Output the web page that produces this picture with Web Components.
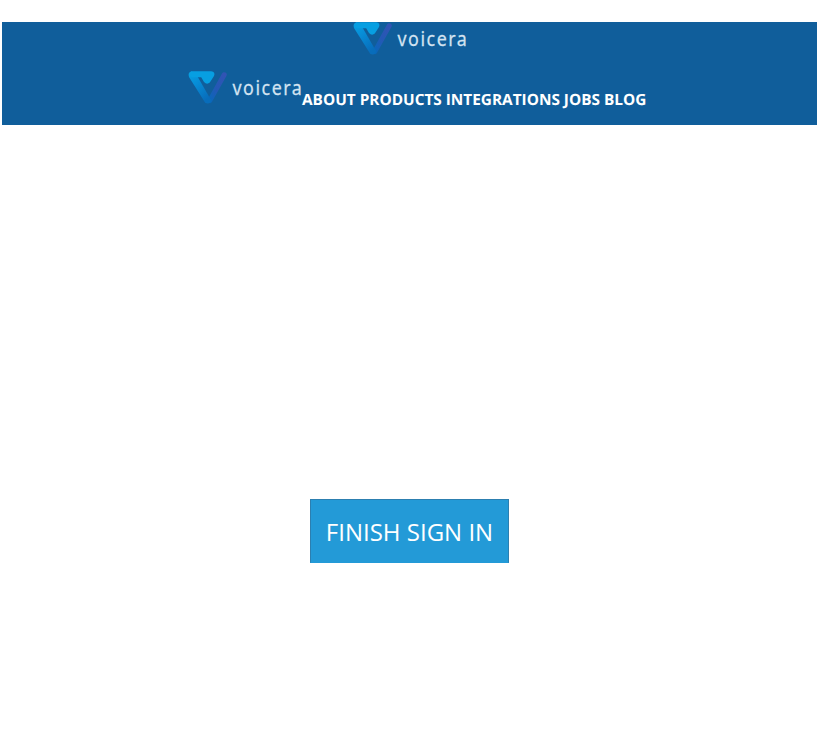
<!DOCTYPE html>
<html lang="en"><head><meta charset="utf-8"><title>Voicera</title>
<style>html,body{margin:0;background:#fff;font-family:"Open Sans","Noto Sans",sans-serif}</style></head>
<body><voicera-page></voicera-page>
<script>
class VoiceraLogo extends HTMLElement{constructor(){super();this.attachShadow({mode:'open'}).innerHTML=`
<style>:host{display:block;width:114px;height:34px;flex:none}svg{display:block;overflow:visible}text{font:400 20.5px "Noto Sans","Open Sans",sans-serif;fill:#d3e3f1;stroke:#d3e3f1;stroke-width:.25px}</style>
<svg width="114" height="34" viewBox="0 0 114 34">
<defs><linearGradient id="l" x1="0" y1="0" x2=".6" y2="1"><stop stop-color="#07a3e4"/><stop offset=".45" stop-color="#078cd6"/><stop offset="1" stop-color="#086dbb"/></linearGradient>
<linearGradient id="r" x1="1" y1="0" x2="0" y2="1"><stop stop-color="#3154b4"/><stop offset=".55" stop-color="#2359b5"/><stop offset="1" stop-color="#0868ba"/></linearGradient></defs>
<path d="M36.2 3.8 L21.8 29.6" fill="none" stroke="url(#r)" stroke-width="5" stroke-linecap="round"/>
<path d="M3.6 .2 L9.5 5.5 L23 29 Q21.8 34 17.2 31.8 L1 6 Q-.5 1.5 3.6 .2Z" fill="url(#l)"/>
<path d="M4 .2H23.2Q27.7 1 26 4.9L21.8 11.5Q18.8 14 16 11L13.2 6.2H4Q1.2 5.6 1.3 3.2Q1.6 .7 4 .2Z" fill="#079fe2"/>
</svg>`;
const s=this.shadowRoot.querySelector('svg');const t=document.createElementNS('http://www.w3.org/2000/svg','text');t.setAttribute('transform','translate(44.5 24.3) scale(.87 1)');t.setAttribute('textLength','79.7');t.textContent='voicera';s.append(t)}}
customElements.define('voicera-logo',VoiceraLogo);
class SiteNav extends HTMLElement{constructor(){super();this.attachShadow({mode:'open'}).innerHTML=`
<style>:host{display:flex;gap:4px;font-weight:700;font-size:15.36px;line-height:22px;color:#fff;white-space:nowrap;text-rendering:geometricPrecision}</style><slot></slot>`}}
customElements.define('site-nav',SiteNav);
class SiteHeader extends HTMLElement{constructor(){super();this.attachShadow({mode:'open'}).innerHTML=`
<style>:host{display:flex;flex-direction:column;gap:15px;box-sizing:border-box;height:103.5px;background:#105e9b}
.top{display:flex;justify-content:center}.row{display:flex;padding-left:186.9px}site-nav{margin:18px 0 0 -.5px}</style>
<div class="top"><voicera-logo></voicera-logo></div>
<div class="row"><voicera-logo></voicera-logo><site-nav><span>ABOUT</span><span>PRODUCTS</span><span>INTEGRATIONS</span><span>JOBS</span><span>BLOG</span></site-nav></div>`}}
customElements.define('site-header',SiteHeader);
class SignButton extends HTMLElement{constructor(){super();this.attachShadow({mode:'open'}).innerHTML=`
<style>:host{display:block}button{display:block;box-sizing:border-box;width:199px;height:64px;padding:2px 0 0;border:1px solid #2c7fb0;border-bottom-color:#239ad7;background:#239ad7;color:#fff;font:400 24px/60px "Open Sans",sans-serif;white-space:nowrap}</style><button><slot></slot></button>`}}
customElements.define('sign-button',SignButton);
class VoiceraPage extends HTMLElement{constructor(){super();this.attachShadow({mode:'open'}).innerHTML=`
<style>:host{display:flex;flex-direction:column;box-sizing:border-box;height:729px;padding:21.5px 1.6px 0}main{display:flex;justify-content:center;padding-top:374px}</style>
<site-header></site-header><main><sign-button>FINISH SIGN IN</sign-button></main>`}}
customElements.define('voicera-page',VoiceraPage);
</script></body></html>
